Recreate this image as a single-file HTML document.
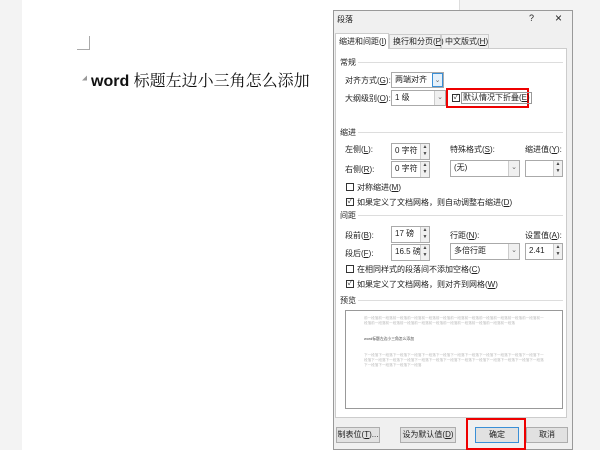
<!DOCTYPE html><html><head><meta charset="utf-8"><style>
*{margin:0;padding:0;box-sizing:border-box}
body{width:600px;height:450px;overflow:hidden;position:relative;background:#f3f3f3;font-family:"Liberation Sans","Noto Sans CJK SC",sans-serif;font-size:8px;color:#222}
.a{position:absolute;white-space:nowrap}
.in{position:absolute;background:#fff;border:1px solid #aaa;font-size:8px;padding:2px 3px;line-height:10px}
.sp{position:absolute;right:0;top:0;bottom:0;width:9px;border-left:1px solid #ccc;background:#f0f0f0;font-size:5px;text-align:center;line-height:7px;color:#444}
.dd{position:absolute;right:0;top:0;bottom:0;width:11px;border-left:1px solid #ccc;background:#f0f0f0;font-size:7px;text-align:center;line-height:14px;color:#666}
.cb{position:absolute;width:8px;height:8px;border:1px solid #333;background:#fff;font-size:7px;line-height:6px;text-align:center}
.ln{position:absolute;height:1px;background:#ddd}
.btn{position:absolute;background:#e1e1e1;border:1px solid #adadad;text-align:center;line-height:14px;height:16px}
</style></head><body>
<div class="a" style="left:22px;top:0;width:438px;height:450px;background:#fff;border-right:1px solid #ddd"></div>
<div class="a" style="left:77px;top:36px;width:13px;height:14px;border-right:1px solid #aaa;border-bottom:1px solid #aaa"></div>
<div class="a" style="left:82px;top:75px;font-size:5px;color:#999">◢</div>
<div class="a" style="left:91px;top:68px;font-size:16px;font-weight:bold;color:#111">word <span style="font-weight:normal;font-family:'Noto Serif CJK SC',serif">标题左边小三角怎么添加</span></div>

<div class="a" style="left:333px;top:10px;width:240px;height:440px;background:#f0f0f0;border:1px solid #999"></div>
<div class="a" style="left:337px;top:14px;font-size:8px">段落</div>
<div class="a" style="left:529px;top:13px;font-size:9px">?</div>
<div class="a" style="left:555px;top:11px;font-size:12px">×</div>
<div class="a" style="left:335px;top:48px;width:232px;height:370px;background:#fff;border:1px solid #ccc"></div>
<div class="a" style="left:335px;top:33px;width:54px;height:16px;background:#fff;border:1px solid #ccc;border-bottom:none;padding:3px 3px;line-height:10px">缩进和间距(<u>I</u>)</div>
<div class="a" style="left:389px;top:34px;width:52px;height:14px;border:1px solid #ccc;border-bottom:none;padding:2px 3px;line-height:10px">换行和分页(<u>P</u>)</div>
<div class="a" style="left:441px;top:34px;width:48px;height:14px;border:1px solid #ccc;border-bottom:none;padding:2px 3px;line-height:10px">中文版式(<u>H</u>)</div>

<div class="a" style="left:340px;top:57px">常规</div><div class="ln" style="left:358px;top:62px;width:205px"></div>
<div class="a" style="left:345px;top:75px">对齐方式(<u>G</u>):</div>
<div class="in" style="left:391px;top:72px;width:53px;height:16px">两端对齐<div class="dd" style="border:1px solid #3a8fd6;background:#e5f1fb">⌄</div></div>
<div class="a" style="left:345px;top:93px">大纲级别(<u>O</u>):</div>
<div class="in" style="left:391px;top:90px;width:55px;height:16px">1 级<div class="dd">⌄</div></div>
<div class="a" style="left:446px;top:88px;width:83px;height:20px;border:2px solid #e00"></div>
<div class="cb" style="left:452px;top:94px">✓</div>
<div class="a" style="left:461px;top:92px;border:1px solid #999;padding:0 1px;line-height:10px">默认情况下折叠(<u>E</u>)</div>

<div class="a" style="left:340px;top:127px">缩进</div><div class="ln" style="left:358px;top:132px;width:205px"></div>
<div class="a" style="left:345px;top:144px">左侧(<u>L</u>):</div>
<div class="in" style="left:391px;top:143px;width:39px;height:17px">0 字符<div class="sp">▲<br>▼</div></div>
<div class="a" style="left:450px;top:144px">特殊格式(<u>S</u>):</div>
<div class="a" style="left:525px;top:144px">缩进值(<u>Y</u>):</div>
<div class="a" style="left:345px;top:164px">右侧(<u>R</u>):</div>
<div class="in" style="left:391px;top:161px;width:39px;height:17px">0 字符<div class="sp">▲<br>▼</div></div>
<div class="in" style="left:450px;top:160px;width:70px;height:17px">(无)<div class="dd">⌄</div></div>
<div class="in" style="left:525px;top:160px;width:38px;height:17px"><div class="sp">▲<br>▼</div></div>
<div class="cb" style="left:346px;top:183px"></div><div class="a" style="left:357px;top:182px">对称缩进(<u>M</u>)</div>
<div class="cb" style="left:346px;top:198px">✓</div><div class="a" style="left:357px;top:197px">如果定义了文档网格，则自动调整右缩进(<u>D</u>)</div>

<div class="a" style="left:340px;top:210px">间距</div><div class="ln" style="left:358px;top:215px;width:205px"></div>
<div class="a" style="left:345px;top:230px">段前(<u>B</u>):</div>
<div class="in" style="left:391px;top:226px;width:39px;height:17px">17 磅<div class="sp">▲<br>▼</div></div>
<div class="a" style="left:450px;top:230px">行距(<u>N</u>):</div>
<div class="a" style="left:525px;top:230px">设置值(<u>A</u>):</div>
<div class="a" style="left:345px;top:248px">段后(<u>F</u>):</div>
<div class="in" style="left:391px;top:244px;width:39px;height:17px">16.5 磅<div class="sp">▲<br>▼</div></div>
<div class="in" style="left:450px;top:243px;width:70px;height:17px">多倍行距<div class="dd">⌄</div></div>
<div class="in" style="left:525px;top:243px;width:38px;height:17px">2.41<div class="sp">▲<br>▼</div></div>
<div class="cb" style="left:346px;top:265px"></div><div class="a" style="left:357px;top:264px">在相同样式的段落间不添加空格(<u>C</u>)</div>
<div class="cb" style="left:346px;top:280px">✓</div><div class="a" style="left:357px;top:279px">如果定义了文档网格，则对齐到网格(<u>W</u>)</div>

<div class="a" style="left:340px;top:295px">预览</div><div class="ln" style="left:358px;top:300px;width:205px"></div>
<div class="a" style="left:345px;top:310px;width:218px;height:99px;background:#fff;border:1px solid #999;overflow:hidden">
<div style="position:absolute;left:18px;top:5px;width:180px;font-size:3.6px;line-height:5px;color:#bbb;white-space:normal">前一段落前一段落前一段落前一段落前一段落前一段落前一段落前一段落前一段落前一段落前一段落前一段落前一段落前一段落前一段落前一段落前一段落前一段落前一段落前一段落前一段落前一段落前一段落</div>
<div style="position:absolute;left:18px;top:26px;font-size:3.8px;color:#444">word标题左边小三角怎么添加</div>
<div style="position:absolute;left:18px;top:42px;width:180px;font-size:3.6px;line-height:5px;color:#bbb;white-space:normal">下一段落下一段落下一段落下一段落下一段落下一段落下一段落下一段落下一段落下一段落下一段落下一段落下一段落下一段落下一段落下一段落下一段落下一段落下一段落下一段落下一段落下一段落下一段落下一段落下一段落下一段落下一段落下一段落下一段落</div>
</div>

<div class="btn" style="left:336px;top:427px;width:44px">制表位(<u>T</u>)...</div>
<div class="btn" style="left:400px;top:427px;width:56px">设为默认值(<u>D</u>)</div>
<div class="btn" style="left:475px;top:427px;width:44px;border:1px solid #3a8fd6">确定</div>
<div class="a" style="left:466px;top:418px;width:60px;height:32px;border:2px solid #e00"></div>
<div class="btn" style="left:526px;top:427px;width:42px">取消</div>
</body></html>
